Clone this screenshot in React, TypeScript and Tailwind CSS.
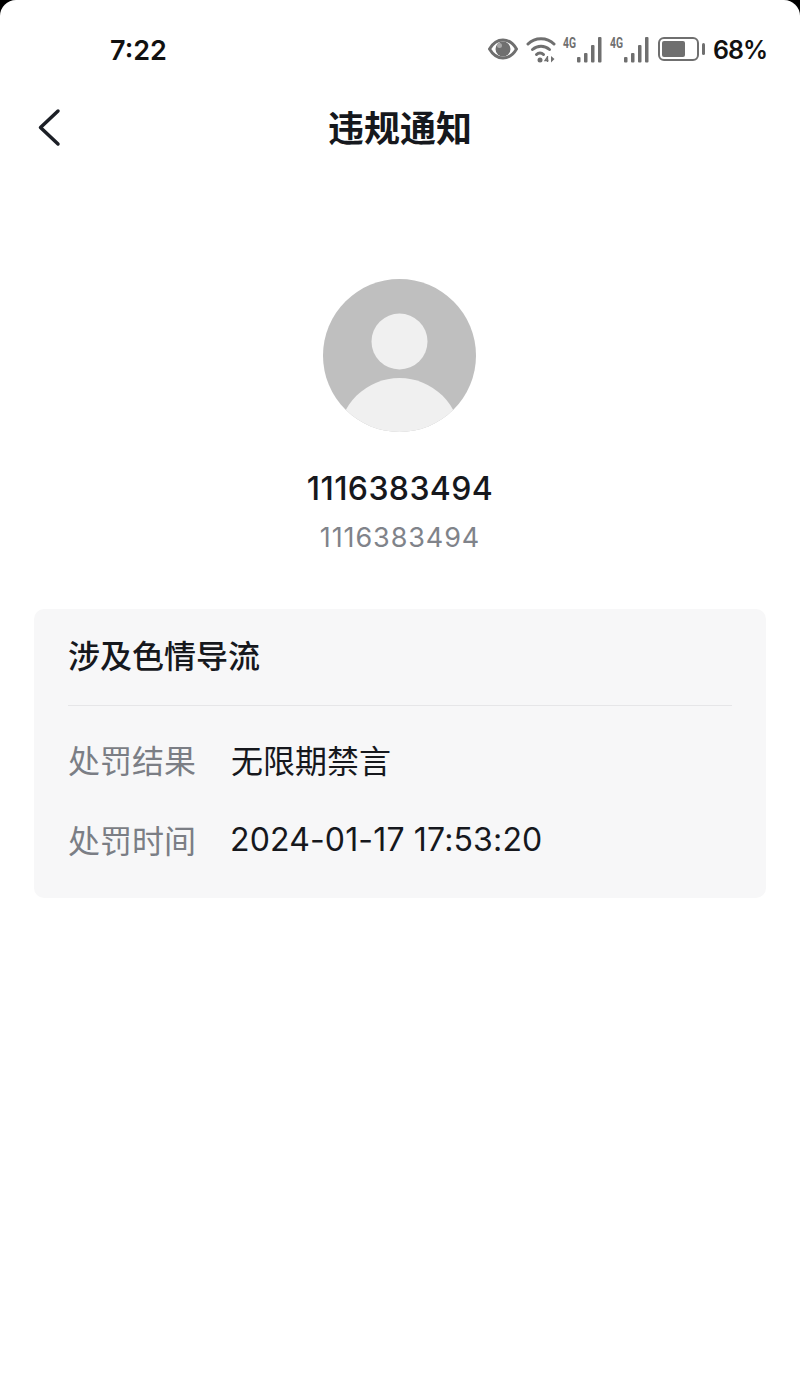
import React from "react";

const font = "font-['Noto_Sans_CJK_SC','Noto_Sans',sans-serif]";
const digits = "font-['Inter','Noto_Sans_CJK_SC',sans-serif]";

const Signal = () => (
  <svg width="40" height="27" viewBox="0 0 40 27" className="text-[#6f6f6f]">
    <text x="1" y="12" fontSize="14" fontWeight="700" fontFamily="Roboto, sans-serif" fill="currentColor" textLength="13" lengthAdjust="spacingAndGlyphs">4G</text>
    <g fill="currentColor">
      <rect x="15" y="21" width="3.500" height="5.500" rx="1" />
      <rect x="22" y="17" width="3.500" height="9.500" rx="1" />
      <rect x="29" y="9" width="3.500" height="17.500" rx="1" />
      <rect x="36" y="1" width="3.500" height="25.500" rx="1" />
    </g>
  </svg>
);

const Eye = () => (
  <svg width="30" height="22" viewBox="0 0 30 22">
    <path d="M1.500 11C5 5 9.500 2 15 2s10 3 13.500 9C25 17 20.500 20 15 20S5 17 1.500 11Z" fill="none" stroke="#6f6f6f" strokeWidth="3" strokeLinejoin="round" />
    <circle cx="15" cy="11" r="7.500" fill="#6f6f6f" />
    <circle cx="11.500" cy="7.500" r="2.500" fill="#a8a8a8" />
  </svg>
);

const Wifi = () => (
  <svg width="30" height="27" viewBox="0 0 30 27">
    <g fill="none" stroke="#6f6f6f" strokeWidth="3" strokeLinecap="round">
      <path d="M2 8C9 1 21 1 28 8" />
      <path d="M6.500 13.500C11.500 9 18.500 9 23.500 13.500" />
      <path d="M10.500 18.500C12.500 16.500 15.500 16.500 17.500 18.500" />
    </g>
    <circle cx="14" cy="24" r="2.500" fill="#6f6f6f" />
    <path d="M21.500 21l-2.500 3.500h3.500M21.500 20v6" fill="none" stroke="#6f6f6f" strokeWidth="1.300" />
    <path d="M25 20v6.500l3.500-3.500Z" fill="#6f6f6f" />
  </svg>
);

const Battery = () => (
  <div className="flex items-center gap-[3px]">
    <div className="flex h-[24px] w-[41px] items-center rounded-[6px] border-2 border-[#6f6f6f] p-[2px]">
      <div className="h-full w-[23px] rounded-[2px] bg-[#6f6f6f]" />
    </div>
    <div className="h-[12px] w-[3px] rounded-full bg-[#6f6f6f]" />
  </div>
);

const Avatar = () => (
  <svg width="153" height="153" viewBox="0 0 153 153" className="mr-[1px]">
    <defs>
      <clipPath id="avatar-clip">
        <circle cx="76.500" cy="76.500" r="76.500" />
      </clipPath>
    </defs>
    <g clipPath="url(#avatar-clip)">
      <rect width="153" height="153" fill="#bfbfbf" />
      <circle cx="76.500" cy="62.500" r="28" fill="#f0f0f0" />
      <circle cx="76.500" cy="160" r="61" fill="#f0f0f0" />
    </g>
  </svg>
);

const App: React.FC = () => {
  return (
    <div className={`h-[1386px] w-[800px] overflow-hidden bg-black ${font}`}>
      <div className="flex h-full flex-col rounded-t-[16px] bg-white">
        {/* status bar */}
        <div className="flex h-[100px] items-center justify-between pb-[2px] pl-[110px] pr-[33px]">
          <span className={`mt-[4px] text-[27px] font-semibold text-[#111] ${digits}`}>7:22</span>
          <div className="flex items-center">
            <Eye />
            <div className="ml-[8px]"><Wifi /></div>
            <div className="ml-[6px]"><Signal /></div>
            <div className="ml-[7px]"><Signal /></div>
            <div className="ml-[9px]"><Battery /></div>
            <span className={`ml-[8px] mt-[4px] text-[25px] font-semibold tracking-[-1px] text-[#111] ${digits}`}>68%</span>
          </div>
        </div>

        {/* title */}
        <div className="flex h-[56px] items-center px-[34px]">
          <svg width="30" height="44" viewBox="0 0 30 44" className="shrink-0">
            <path d="M24 5 6.500 21.500 24 38" fill="none" stroke="#1c1f26" strokeWidth="3.500" strokeLinecap="round" strokeLinejoin="round" />
          </svg>
          <h1 className="flex-1 pb-[4px] pr-[30px] text-center text-[36px] font-bold text-[#16181d]">违规通知</h1>
        </div>

        {/* user */}
        <div className="mt-[123px] flex flex-col items-center">
          <Avatar />
          <div className={`mt-[32px] text-[32px] font-medium leading-[50px] tracking-[0.4px] text-[#16181d] ${digits}`}>1116383494</div>
          <div className={`text-[27px] leading-[48px] tracking-[0.9px] text-[#80838a] ${digits}`}>1116383494</div>
        </div>

        {/* notice card */}
        <div className="mx-[34px] mt-[47px] h-[289px] rounded-[10px] bg-[#f7f7f8] px-[34px]">
          <div className="flex h-[97px] items-center border-b border-[#e6e6e8] pb-[6px] text-[32px] font-medium text-[#16181d]">
            涉及色情导流
          </div>
          <div className="mt-[28px] flex flex-col gap-[30px] text-[32px] leading-[50px]">
            <div className="flex">
              <span className="w-[163px] text-[#7b7e85]">处罚结果</span>
              <span className="text-[#16181d]">无限期禁言</span>
            </div>
            <div className="flex">
              <span className="w-[163px] text-[#7b7e85]">处罚时间</span>
              <span className={`ml-[-1px] mt-[1px] text-[32px] tracking-[0.15px] text-[#16181d] ${digits}`}>2024-01-17 17:53:20</span>
            </div>
          </div>
        </div>
      </div>
    </div>
  );
};

export default App;
